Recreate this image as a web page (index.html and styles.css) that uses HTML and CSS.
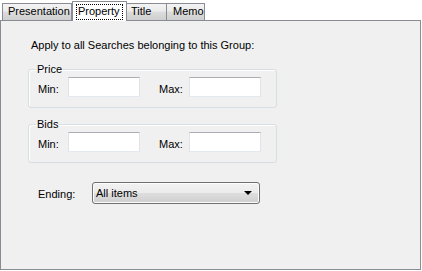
FILE: index.html
```html
<!DOCTYPE html>
<html>
<head>
<meta charset="utf-8">
<link rel="stylesheet" href="styles.css">
</head>
<body>
<div class="window">
  <div class="tabs">
    <div class="tab tab-presentation">Presentation</div>
    <div class="tab tab-active"><span class="focus">Property</span></div>
    <div class="tab tab-title">Title</div>
    <div class="tab tab-memo">Memo</div>
  </div>
  <div class="panel">
    <div class="heading">Apply to all Searches belonging to this Group:</div>
    <fieldset class="group">
      <legend>Price</legend>
      <div class="row">
        <span class="lbl">Min:</span><span class="textbox"></span>
        <span class="lbl lbl-max">Max:</span><span class="textbox"></span>
      </div>
    </fieldset>
    <fieldset class="group group-bids">
      <legend>Bids</legend>
      <div class="row">
        <span class="lbl">Min:</span><span class="textbox"></span>
        <span class="lbl lbl-max">Max:</span><span class="textbox"></span>
      </div>
    </fieldset>
    <div class="ending">
      <span class="lbl-ending">Ending:</span>
      <div class="combo"><span class="combo-text">All items</span><span class="arrow"></span></div>
    </div>
  </div>
</div>
</body>
</html>
```

FILE: styles.css
```css
html, body { margin: 0; padding: 0; background: #fff; }
body {
  font-family: "Liberation Sans", Arial, sans-serif;
  font-size: 11px;
  color: #000;
}
.window { width: 422px; height: 271px; background: #fff; }
.tabs {
  display: flex;
  align-items: flex-end;
  height: 20px;
  padding-left: 2px;
  position: relative;
  z-index: 1;
}
.tab {
  box-sizing: border-box;
  height: 17px;
  border: 1px solid #898c95;
  border-bottom: none;
  border-radius: 1px 1px 0 0;
  background: linear-gradient(#f3f3f3 0%, #ebebeb 45%, #dcdcdc 50%, #cfcfcf 100%);
  line-height: 15px;
  padding: 0 0 0 5px;
  margin-right: -1px;
}
.tab-presentation { width: 70px; margin-right: 0; }
.tab-title { width: 42px; padding-left: 5px; }
.tab-memo { width: 39px; padding-left: 6px; }
.tab-active {
  position: relative;
  z-index: 2;
  width: 55px;
  height: 20px;
  margin: 0 -2px -1px 0;
  background: #fff;
  padding: 2px 0 0 3px;
  line-height: 13px;
}
.focus {
  display: inline-block;
  border: 1px dotted #000;
  padding: 0 2px 1px 1px;
  line-height: 13px;
}
.panel {
  box-sizing: border-box;
  width: 421px;
  height: 250px;
  border: 1px solid #898c95;
  background: #f0f0f0;
  padding: 18px 0 0 27px;
}
.heading { line-height: 13px; margin-left: 3px; }
.group {
  box-sizing: border-box;
  width: 249px;
  margin: 11px 0 0 0;
  padding: 1px 0 10px 9px;
  border: 1px solid #d5dfe5;
  border-radius: 3px;
  box-shadow: inset 1px 1px 0 #fff;
}
.group-bids { margin-top: 10px; }
.group legend {
  padding: 0 1px;
  margin-left: -2px;
  line-height: 13px;
}
.row { display: flex; align-items: flex-start; }
.lbl { width: 30px; line-height: 13px; padding-top: 6px; }
.lbl-max { margin-left: 19px; }
.textbox {
  box-sizing: border-box;
  width: 72px;
  height: 20px;
  background: #fff;
  border: 1px solid #e2e3ea;
  border-top-color: #abadb3;
  border-bottom-color: #e3e9ef;
}
.ending {
  display: flex;
  align-items: flex-start;
  margin-top: 19px;
  padding-left: 10px;
}
.lbl-ending { width: 54px; line-height: 13px; padding-top: 6px; }
.combo {
  box-sizing: border-box;
  width: 168px;
  height: 22px;
  border: 1px solid #707070;
  border-radius: 3px;
  background: linear-gradient(#f2f2f2 0%, #ebebeb 50%, #dddddd 51%, #cfcfcf 100%);
  box-shadow: inset 0 0 0 1px #fcfcfc;
  display: flex;
  align-items: center;
  justify-content: space-between;
  padding: 0 7px 0 3px;
}
.combo-text { line-height: 13px; }
.arrow {
  width: 0; height: 0;
  border-left: 4px solid transparent;
  border-right: 4px solid transparent;
  border-top: 4px solid #000;
}
```
